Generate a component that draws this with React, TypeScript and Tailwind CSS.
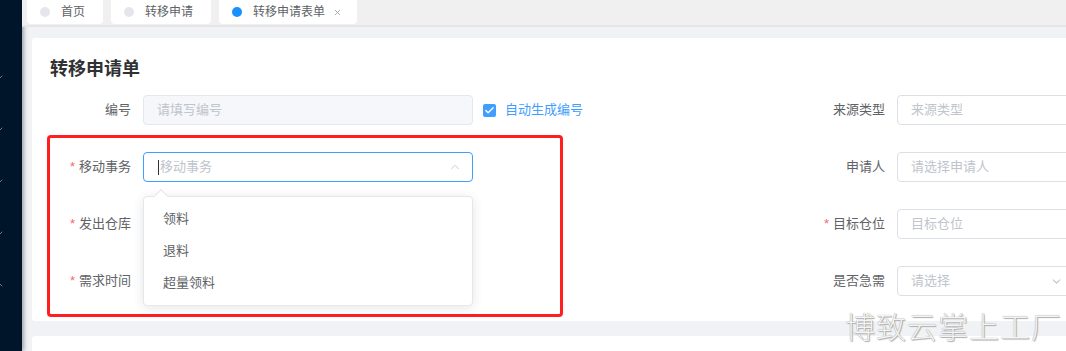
import {ChevronDown, ChevronUp, Check, X} from "lucide-react";

const font = "font-['Liberation_Sans','Noto_Sans_CJK_SC',sans-serif]";

function Tab({label, active, closable}: {label: string; active?: boolean; closable?: boolean})
{
    return (
        <div className={`flex h-[24px] items-center rounded-b-sm bg-white pl-[13px] text-[12px] text-[#606266] ${closable ? "pr-[15px]" : "pr-[18px]"}`}>
            <span className={`h-[10px] w-[10px] rounded-full ${active ? "bg-[#1890ff]" : "bg-[#e4e6eb]"}`}></span>
            <span className="ml-[11px]">{label}</span>
            {closable && <X className="ml-[8px] h-[9px] w-[9px] text-[#909399]" strokeWidth={2}/>}
        </div>
    );
}

function Label({text, required, width}: {text: string; required?: boolean; width: string})
{
    return (
        <div className={`${width} flex shrink-0 items-center justify-end pr-[12px] text-[13px] text-[#606266]`}>
            {required && <span className="mr-[4px] text-[#f56c6c]">*</span>}
            {text}
        </div>
    );
}

function Input({placeholder, disabled, arrow, width}: {placeholder: string; disabled?: boolean; arrow?: boolean; width: string})
{
    return (
        <div
            className={`${width} flex h-[30px] shrink-0 items-center justify-between rounded-[4px] border px-[13px] text-[13px] text-[#c0c4cc] ${disabled ? "border-[#e4e7ed] bg-[#f5f7fa]" : "border-[#dcdfe6] bg-white"}`}>
            <span>{placeholder}</span>
            {arrow && <ChevronDown className="h-[13px] w-[13px] text-[#c0c4cc]"/>}
        </div>
    );
}

function SideChevron({up}: {up?: boolean})
{
    return (
        <div className="-ml-[4px] h-[8px] w-[8px] text-[#a3acb7]">
            {up ? <ChevronUp className="h-[8px] w-[8px]" strokeWidth={2}/> :
                <ChevronDown className="h-[8px] w-[8px]" strokeWidth={2}/>}
        </div>
    );
}

export default function App()
{
    return (
        <div className={`${font} relative flex h-[351px] w-[1066px] overflow-hidden bg-[#f0f2f5]`}>
            <aside className="flex w-[22px] shrink-0 flex-col bg-[#001529] pt-[73px] gap-[44px] shadow-[2px_0_4px_rgba(0,21,41,0.35)]">
                <SideChevron/>
                <SideChevron/>
                <SideChevron/>
                <SideChevron/>
                <SideChevron up/>
            </aside>

            <main className="flex min-w-0 flex-1 flex-col">
                <div className="flex h-[27px] shrink-0 gap-[8px] border-b-2 border-[#e6e6e6] bg-[#f0f0f0] pl-[5px]">
                    <Tab label="首页"/>
                    <Tab label="转移申请"/>
                    <Tab label="转移申请表单" active closable/>
                </div>

                <div className="flex flex-col gap-[15px] pl-[10px] pt-[11px]">
                    <section className="relative h-[283px] w-[1060px] rounded-[3px] bg-white pl-[18px] pt-[18px]">
                        <h1 className="text-[18px] font-bold leading-[27px] text-[#303133]">转移申请单</h1>

                        <div className="mt-[12px] flex flex-col gap-[27px]">
                            <div className="flex items-center">
                                <Label text="编号" width="w-[93px]"/>
                                <Input placeholder="请填写编号" disabled width="w-[330px]"/>
                                <div className="ml-[10px] flex items-center gap-[9px] text-[13px] text-[#409eff]">
                                    <span className="flex h-[13px] w-[13px] items-center justify-center rounded-[2px] bg-[#409eff]">
                                        <Check className="h-[11px] w-[11px] text-white" strokeWidth={3}/>
                                    </span>
                                    自动生成编号
                                </div>
                                <div className="w-[207px]"></div>
                                <Label text="来源类型" width="w-[107px]"/>
                                <Input placeholder="来源类型" width="w-[180px]"/>
                            </div>

                            <div className="flex items-center">
                                <Label text="移动事务" required width="w-[93px]"/>
                                <div className="relative flex h-[30px] w-[330px] shrink-0 items-center justify-between rounded-[4px] border border-[#409eff] bg-white pl-[14px] pr-[10px] text-[13px] text-[#c0c4cc]">
                                    <span className="flex items-center">
                                        <span className="mr-px h-[15px] w-px bg-[#303133]"></span>
                                        移动事务
                                    </span>
                                    <ChevronUp className="h-[14px] w-[14px] text-[#c0c4cc]" strokeWidth={1.5}/>

                                    <div className="absolute left-[-1px] top-[43px] z-10 w-[330px] rounded-[4px] border border-[#e4e7ed] bg-white py-[6px] shadow-[0_2px_12px_rgba(0,0,0,0.1)]">
                                        <span className="absolute -top-[6px] left-[12px] h-[10px] w-[10px] rotate-45 border-l border-t border-[#e4e7ed] bg-white"></span>
                                        {["领料", "退料", "超量领料"].map(item => (
                                            <div key={item} className="flex h-[32px] items-center px-[19px] text-[13px] text-[#606266]">
                                                {item}
                                            </div>
                                        ))}
                                    </div>
                                </div>
                                <div className="w-[317px]"></div>
                                <Label text="申请人" width="w-[107px]"/>
                                <Input placeholder="请选择申请人" width="w-[180px]"/>
                            </div>

                            <div className="flex items-center">
                                <Label text="发出仓库" required width="w-[93px]"/>
                                <Input placeholder="" width="w-[330px]"/>
                                <div className="w-[317px]"></div>
                                <Label text="目标仓位" required width="w-[107px]"/>
                                <Input placeholder="目标仓位" width="w-[180px]"/>
                            </div>

                            <div className="flex items-center">
                                <Label text="需求时间" required width="w-[93px]"/>
                                <Input placeholder="" width="w-[330px]"/>
                                <div className="w-[317px]"></div>
                                <Label text="是否急需" width="w-[107px]"/>
                                <Input placeholder="请选择" arrow width="w-[180px]"/>
                            </div>
                        </div>

                        <div className="pointer-events-none absolute left-[15px] top-[97px] h-[182px] w-[516px] rounded-[4px] border-[3px] border-[#ff1f1f]"></div>
                    </section>

                    <section className="h-[40px] w-[1060px] rounded-[3px] bg-white"></section>
                </div>
            </main>

            <div className="pointer-events-none absolute left-[845px] top-[308px] text-[30px] font-light leading-[40px] tracking-[1px] text-[#f4f4f4] [text-shadow:0_0_1px_#8a8a8a,1px_1px_1px_#b0b0b0]">
                博致云掌上工厂
            </div>
        </div>
    );
}
